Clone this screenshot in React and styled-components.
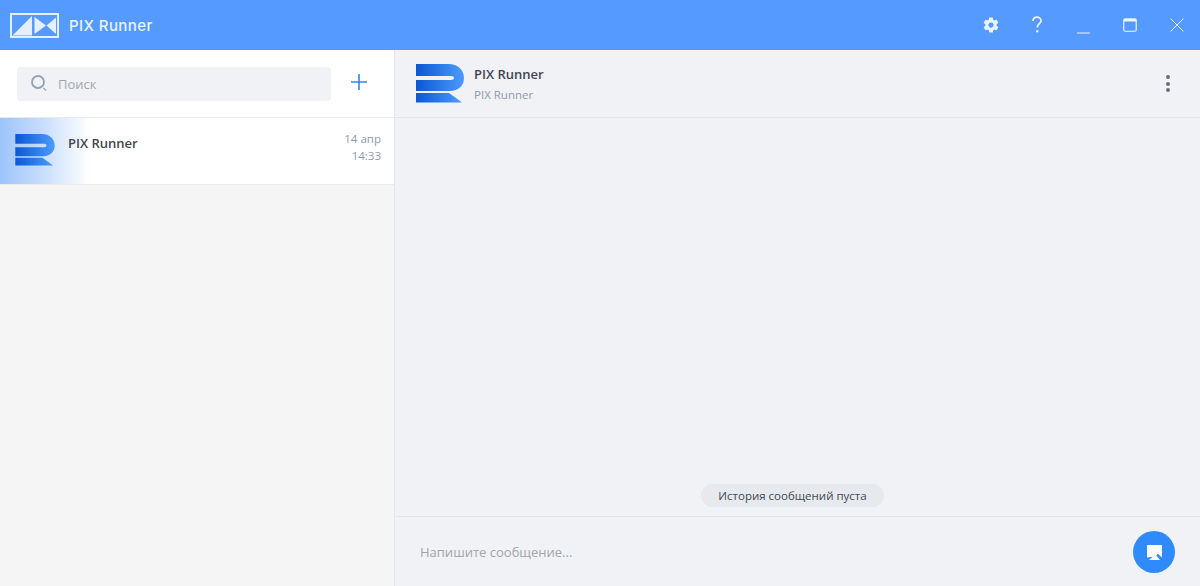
import React from "react";
import styled, { createGlobalStyle } from "styled-components";

const Global = createGlobalStyle`
  html, body { margin: 0; padding: 0; height: 100%; }
  body { font-family: "Open Sans", "Noto Sans", sans-serif; overflow: hidden; }
  #root { height: 100%; }
`;

const Win = styled.div`
  width: 1200px; height: 586px; display: flex; flex-direction: column; background: #f0f2f6;
`;
const TitleBar = styled.header`
  height: 50px; flex: none; background: #559bff; display: flex; align-items: center; padding-left: 10px; color: #fff;
`;
const AppName = styled.div`
  margin-left: 10px; font: 500 15px Inter, sans-serif; letter-spacing: 0.4px; color: #eaf3ff;
`;
const WinControls = styled.div`
  margin-left: auto; display: flex; align-items: center; height: 100%;
`;
const WinBtn = styled.button`
  width: 46.5px; height: 100%; border: 0; background: none; padding: 0; display: flex; align-items: center; justify-content: center; color: #e6f0ff;
`;
const Body = styled.div`
  flex: 1; display: flex; min-height: 0;
`;
const Sidebar = styled.aside`
  width: 394px; flex: none; background: #f5f5f5; border-right: 1px solid #e4e7ec; display: flex; flex-direction: column;
`;
const SearchRow = styled.div`
  height: 67px; flex: none; background: #fff; border-bottom: 1px solid #e6e9ee; display: flex; align-items: center; padding: 0 0 0 17px;
`;
const SearchBox = styled.div`
  width: 314px; height: 34px; border-radius: 4px; background: #f0f2f6; display: flex; align-items: center; padding-left: 13px; box-sizing: border-box; gap: 9px;
  font-size: 13px; color: #a3a7ad;
`;
const AddBtn = styled.button`
  margin-left: 20px; width: 20px; height: 20px; border: 0; background: none; padding: 0; display: flex; color: #2c87f7;
`;
const Item = styled.div`
  height: 67px; flex: none; display: flex; padding: 0 13px 0 15px; box-sizing: border-box;
  background: linear-gradient(90deg, #9cc4fb 0, #c5dcfd 40px, #ffffff 90px);
  border-bottom: 1px solid #e9ebef;
`;
const ItemIcon = styled.div`
  margin-top: 16px; width: 40px; height: 32px;
`;
const ItemName = styled.div`
  margin: 16px 0 0 13px; font-size: 13px; font-weight: 600; color: #3f4650; line-height: 18px;
`;
const ItemTime = styled.div`
  margin-left: auto; padding-top: 12px; text-align: right; font-size: 11.5px; line-height: 17px; color: #8c9bb0;
`;
const Main = styled.main`
  flex: 1; display: flex; flex-direction: column; min-width: 0;
`;
const ChatHeader = styled.div`
  height: 67px; flex: none; border-bottom: 1px solid #e4e7ec; display: flex; align-items: center; padding: 0 30px 0 21px; box-sizing: content-box;
`;
const ChatTitles = styled.div`
  margin-left: 10px; display: flex; flex-direction: column; gap: 4px;
`;
const ChatName = styled.div`
  font-size: 13px; font-weight: 600; color: #3f4650; line-height: 18px;
`;
const ChatSub = styled.div`
  font-size: 11.5px; color: #8c9bb0; line-height: 16px;
`;
const Dots = styled.div`
  margin-left: auto; display: flex; flex-direction: column; gap: 2.5px;
`;
const Dot = styled.span`
  width: 4px; height: 4px; border-radius: 50%; background: #6c7078;
`;
const History = styled.div`
  flex: 1; display: flex; align-items: flex-end; justify-content: center; padding-bottom: 9px; padding-right: 10px;
`;
const Pill = styled.div`
  height: 23px; line-height: 23px; padding: 0 17px; border-radius: 12px; background: #e6e9ee; font-size: 11.5px; color: #444a52;
`;
const Composer = styled.div`
  height: 69px; flex: none; border-top: 1px solid #e2e6eb; display: flex; align-items: center; padding: 0 25px 0 25px; font-size: 13px; color: #a2a5aa;
`;
const Send = styled.button`
  margin-left: auto; width: 42px; height: 42px; margin-top: 1px; border-radius: 50%; border: 0; background: #2f8bfb; padding: 0; display: flex; align-items: center; justify-content: center;
`;

const RLogo = ({ id, width, height }) => (
  <svg width={width} height={height} viewBox="0 0 48 39">
    <defs>
      <linearGradient id={id} x1="0" x2="1" y1="0" y2="0">
        <stop offset="0" stopColor="#0c57d4" />
        <stop offset="1" stopColor="#4b9cfd" />
      </linearGradient>
    </defs>
    <path fill={`url(#${id})`} d="M0 0H32C42 0 48 6 48 14C48 22 42 27 34 27H0V16H35C37 16 38 15.200 38 14C38 12.800 37 12 35 12H0Z" />
    <path fill={`url(#${id})`} d="M0 29H33L46 38.500H0Z" />
  </svg>
);

export default function App() {
  return (
    <Win>
      <Global />
      <TitleBar>
        <svg width="49" height="25" viewBox="0 0 49 25">
          <path fill="#e4efff" fillRule="evenodd" d="M0 0H49V25H0ZM2 2V23H47V2Z" />
          <path fill="#e4efff" d="M2.500 22.500L22 3V22.500Z" />
          <path fill="#e4efff" d="M24.500 4V21L36 12.500Z" />
          <path fill="#e4efff" d="M46 4.500V21L36.500 12.500Z" />
        </svg>
        <AppName>PIX Runner</AppName>
        <WinControls>
          <WinBtn>
            <svg width="18" height="18" viewBox="0 0 24 24"><path fill="#eaf3ff" fillRule="evenodd" d="M19.430 12.980c.04-.32.07-.64.07-.98s-.03-.66-.07-.98l2.110-1.650c.19-.15.24-.42.120-.64l-2-3.460c-.12-.22-.39-.3-.61-.22l-2.490 1c-.52-.4-1.080-.73-1.690-.98l-.38-2.650C14.460 2.180 14.250 2 14 2h-4c-.25 0-.46.18-.49.42l-.38 2.650c-.61.25-1.170.59-1.690.98l-2.490-1c-.23-.09-.49 0-.61.22l-2 3.460c-.13.220-.07.49.12.64l2.110 1.650c-.04.32-.07.65-.07.98s.03.66.07.98l-2.110 1.650c-.19.150-.24.42-.12.64l2 3.460c.12.22.39.3.61.22l2.490-1c.52.4 1.080.73 1.690.98l.38 2.650c.03.24.24.42.49.42h4c.25 0 .46-.18.49-.42l.38-2.650c.61-.25 1.170-.59 1.690-.98l2.490 1c.23.09.49 0 .61-.22l2-3.460c.12-.22.07-.49-.12-.64l-2.110-1.650zM12 15.500c-1.930 0-3.500-1.570-3.500-3.500s1.570-3.500 3.500-3.500 3.500 1.570 3.500 3.500-1.570 3.500-3.500 3.500z"/></svg>
          </WinBtn>
          <WinBtn>
            <svg width="12" height="18" viewBox="0 0 12 18" fill="none"><path stroke="#eaf3ff" strokeWidth="1.800" d="M2 5C2 2.500 4 1.200 6 1.200S10 2.600 10 4.800C10 7.500 6.200 7.800 6.200 11.500" /><circle cx="6.200" cy="15.300" r="1.200" fill="#eaf3ff" /></svg>
          </WinBtn>
          <WinBtn>
            <svg width="14" height="18" viewBox="0 0 14 18"><path fill="#eaf3ff" d="M0 16.500H13V17.500H0Z" /></svg>
          </WinBtn>
          <WinBtn>
            <svg width="14" height="14" viewBox="0 0 14 14" fill="none"><rect x="0.750" y="0.750" width="12.500" height="12.500" rx="1.500" stroke="#eaf3ff" strokeWidth="1.200" /><path fill="#eaf3ff" d="M1 1H13V3.500H1Z" /></svg>
          </WinBtn>
          <WinBtn>
            <svg width="14" height="14" viewBox="0 0 14 14" fill="none"><path stroke="#eaf3ff" strokeWidth="1" d="M0.500 0.500L13.500 13.500M13.500 0.500L0.500 13.500" /></svg>
          </WinBtn>
        </WinControls>
      </TitleBar>
      <Body>
        <Sidebar>
          <SearchRow>
            <SearchBox>
              <svg width="19" height="19" viewBox="0 0 19 19" fill="none"><circle cx="8" cy="8" r="6" stroke="#93a3b8" strokeWidth="1.800" /><path stroke="#93a3b8" strokeWidth="1.200" d="M13.500 14L16 16.500" /></svg>
              Поиск
            </SearchBox>
            <AddBtn>
              <svg width="16" height="16" viewBox="0 0 16 16"><path fill="#2c87f7" d="M7.200 0H8.800V7.200H16V8.800H8.800V16H7.200V8.800H0V7.200H7.200Z" /></svg>
            </AddBtn>
          </SearchRow>
          <Item>
            <ItemIcon><RLogo id="g1" width="40" height="32" /></ItemIcon>
            <ItemName>PIX Runner</ItemName>
            <ItemTime>14 апр<br />14:33</ItemTime>
          </Item>
        </Sidebar>
        <Main>
          <ChatHeader>
            <RLogo id="g2" width="48" height="39" />
            <ChatTitles>
              <ChatName>PIX Runner</ChatName>
              <ChatSub>PIX Runner</ChatSub>
            </ChatTitles>
            <Dots><Dot /><Dot /><Dot /></Dots>
          </ChatHeader>
          <History><Pill>История сообщений пуста</Pill></History>
          <Composer>
            Напишите сообщение...
            <Send>
              <svg width="15" height="15" viewBox="0 0 15 15"><path fill="#fff" d="M0 0H15V4.500L8 11.500L0 12.500Z" /><path fill="#fff" d="M2 15L8.500 9.500L13 15Z" /><path fill="#fff" d="M10 8L15 5V12.500Z" /></svg>
            </Send>
          </Composer>
        </Main>
      </Body>
    </Win>
  );
}
